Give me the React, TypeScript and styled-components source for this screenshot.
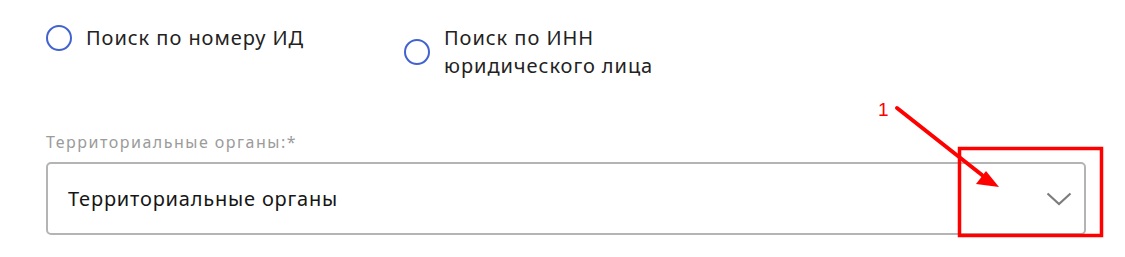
import React, { FC, ReactElement } from 'react'
import styled, { createGlobalStyle } from 'styled-components'

const GlobalStyle = createGlobalStyle`
  html, body {
    margin: 0;
    padding: 0;
    background: #fff;
  }
  body {
    font-family: 'Noto Sans', 'Open Sans', sans-serif;
    color: #1e1e1e;
  }
`

const Page = styled.div`
  position: relative;
  width: 1125px;
  height: 257px;
  padding: 24px 39px 0 46px;
  box-sizing: border-box;
`

const RadioRow = styled.div`
  display: flex;
  align-items: flex-start;
`

const Option = styled.label<{ $width?: number }>`
  display: flex;
  align-items: center;
  gap: 14px;
  width: ${props => (props.$width ? `${props.$width}px` : 'auto')};
  font-size: 20px;
  line-height: 28px;
  letter-spacing: 0.95px;
  color: #222;
  cursor: pointer;
`

const Circle = styled.span`
  flex: none;
  width: 26px;
  height: 26px;
  border: 2px solid #4262d0;
  border-radius: 50%;
  box-sizing: border-box;
`

const Field = styled.div`
  margin-top: 53px;
  display: flex;
  flex-direction: column;
`

const Label = styled.div`
  font-size: 16px;
  line-height: 18px;
  letter-spacing: 1.5px;
  color: #9b9b9b;
  margin-bottom: 11px;
`

const SelectBox = styled.div`
  height: 73px;
  border: 2px solid #b4b4b4;
  border-radius: 5px;
  box-sizing: border-box;
  display: flex;
  align-items: center;
  justify-content: space-between;
  padding: 0 12px 0 20px;
  font-size: 20px;
  letter-spacing: 0.8px;
  color: #161616;
`

const Chevron = styled.svg`
  width: 26px;
  height: 14px;
`

const Annotation = styled.svg`
  position: absolute;
  left: 0;
  top: 0;
  pointer-events: none;
`

const App: FC = (): ReactElement => {
    return (
        <>
            <GlobalStyle />
            <Page>
                <RadioRow>
                    <Option $width={358}>
                        <Circle />
                        <span>Поиск по номеру ИД</span>
                    </Option>
                    <Option>
                        <Circle />
                        <span>Поиск по ИНН<br />юридического лица</span>
                    </Option>
                </RadioRow>
                <Field>
                    <Label>Территориальные органы:*</Label>
                    <SelectBox>
                        <span>Территориальные органы</span>
                        <Chevron viewBox="0 0 26 14">
                            <path d="M1.5 1.5 L13 12 L24.5 1.5" fill="none" stroke="#7c7c7c" strokeWidth="2.2" />
                        </Chevron>
                    </SelectBox>
                </Field>
                <Annotation width="1125" height="257" viewBox="0 0 1125 257">
                    <text x="878" y="116" fill="#ff0000" fontSize="19" fontFamily="'Liberation Sans', sans-serif">1</text>
                    <line x1="897" y1="108" x2="982" y2="175" stroke="#ff0000" strokeWidth="4" strokeLinecap="round" />
                    <polygon points="999,187 976,184 986,171" fill="#ff0000" />
                    <rect x="959.5" y="148.5" width="142" height="87" fill="none" stroke="#ff0000" strokeWidth="3.5" />
                </Annotation>
            </Page>
        </>
    )
}

export default App
